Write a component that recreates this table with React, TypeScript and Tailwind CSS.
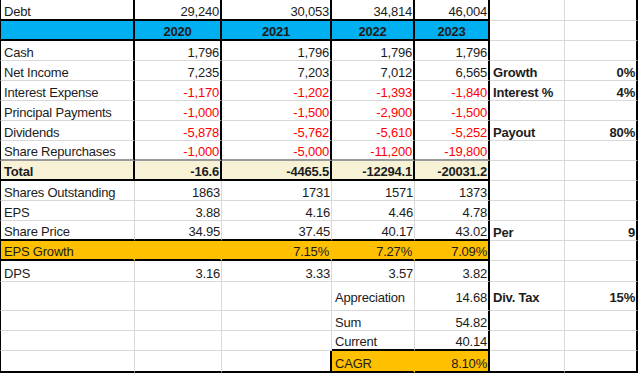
import React from 'react'

type Align = 'l' | 'r' | 'c'
type Cell = { t?: string; a?: Align; b?: boolean; red?: boolean }

const COLS = ['w-[135px]', 'w-[87px]', 'w-[110px]', 'w-[83px]', 'w-[75px]', 'w-[75px]', 'w-[73px]']

const HEIGHTS = [
  'h-[21px]', 'h-[20px]', 'h-[20px]', 'h-[20px]', 'h-[20px]', 'h-[20px]', 'h-[20px]', 'h-[20px]', 'h-[20px]',
  'h-[20px]', 'h-[20px]', 'h-[20px]', 'h-[20px]', 'h-[21px]', 'h-[29px]', 'h-[20px]', 'h-[20px]', 'h-[22px]',
]

const L = (t: string, b = false): Cell => ({ t, a: 'l', b })
const R = (t: string, b = false): Cell => ({ t, a: 'r', b })
const N = (t: string): Cell => ({ t, a: 'r', red: true })
const H = (t: string): Cell => ({ t, a: 'c', b: true })
const E: Cell = {}

const ROWS: Cell[][] = [
  [L('Debt'), R('29,240'), R('30,053'), R('34,814'), R('46,004'), E, E],
  [E, H('2020'), H('2021'), H('2022'), H('2023'), E, E],
  [L('Cash'), R('1,796'), R('1,796'), R('1,796'), R('1,796'), E, E],
  [L('Net Income'), R('7,235'), R('7,203'), R('7,012'), R('6,565'), L('Growth', true), R('0%', true)],
  [L('Interest Expense'), N('-1,170'), N('-1,202'), N('-1,393'), N('-1,840'), L('Interest %', true), R('4%', true)],
  [L('Principal Payments'), N('-1,000'), N('-1,500'), N('-2,900'), N('-1,500'), E, E],
  [L('Dividends'), N('-5,878'), N('-5,762'), N('-5,610'), N('-5,252'), L('Payout', true), R('80%', true)],
  [L('Share Repurchases'), N('-1,000'), N('-5,000'), N('-11,200'), N('-19,800'), E, E],
  [L('Total', true), R('-16.6', true), R('-4465.5', true), R('-12294.1', true), R('-20031.2', true), E, E],
  [L('Shares Outstanding'), R('1863'), R('1731'), R('1571'), R('1373'), E, E],
  [L('EPS'), R('3.88'), R('4.16'), R('4.46'), R('4.78'), E, E],
  [L('Share Price'), R('34.95'), R('37.45'), R('40.17'), R('43.02'), L('Per', true), R('9', true)],
  [L('EPS Growth'), E, R('7.15%'), R('7.27%'), R('7.09%'), E, E],
  [L('DPS'), R('3.16'), R('3.33'), R('3.57'), R('3.82'), E, E],
  [E, E, E, L('Appreciation'), R('14.68'), L('Div. Tax', true), R('15%', true)],
  [E, E, E, L('Sum'), R('54.82'), E, E],
  [E, E, E, L('Current'), R('40.14'), E, E],
  [E, E, E, L('CAGR'), R('8.10%'), E, E],
]

function rightBorder(r: number, c: number) {
  if (c === 6 || c === 4) return 'border-r-2 border-r-black'
  if (c === 5) return 'border-r border-r-[#d9d9d9]'
  if (r === 12) return 'border-r-2 border-r-[#ffc000]'
  if (r === 17 && c === 3) return 'border-r-2 border-r-[#ffc000]'
  if (r === 17 && c === 2) return 'border-r-2 border-r-black'
  if (r <= 8) return 'border-r-2 border-r-black'
  return 'border-r border-r-[#d9d9d9]'
}

function bottomBorder(r: number, c: number) {
  if (r === 17) return 'border-b-2 border-b-black'
  if (c >= 5) return 'border-b border-b-[#d9d9d9]'
  if (r === 0 || r === 1 || r === 8 || r === 11 || r === 12) return 'border-b-2 border-b-black'
  if (r === 7) return 'border-b-2 border-b-[#9a9a9a]'
  if (r === 16 && c >= 3) return 'border-b-2 border-b-black'
  return 'border-b border-b-[#d9d9d9]'
}

function background(r: number, c: number) {
  if (r === 1 && c <= 4) return 'bg-[#00b0f0]'
  if (r === 8 && c <= 4) return 'bg-[#f7f2d6]'
  if (r === 12 && c <= 4) return 'bg-[#ffc000]'
  if (r === 17 && (c === 3 || c === 4)) return 'bg-[#ffc000]'
  return 'bg-white'
}

export default function App() {
  return (
    <div className="w-[640px] h-[373px] bg-white overflow-hidden font-['Liberation_Sans',Arial,sans-serif] text-[13px] tracking-[-0.2px] leading-[13px] text-[#1c1c1c]">
      {ROWS.map((row, r) => (
        <div key={r} className={`flex ${HEIGHTS[r]}`}>
          {row.map((cell, c) => (
            <div
              key={c}
              className={[
                'flex shrink-0 whitespace-nowrap',
                COLS[c],
                rightBorder(r, c),
                bottomBorder(r, c),
                background(r, c),
                c === 0 ? 'border-l border-l-black' : '',
                r === 14 ? 'items-center pt-[2px]' : 'items-end pb-[1px]',
                cell.a === 'r' ? 'justify-end pr-[1px]' : cell.a === 'c' ? 'justify-center' : 'justify-start pl-[3px]',
                cell.b ? 'font-bold' : '',
                cell.red ? 'text-[#ff0000]' : '',
              ].join(' ')}
            >
              {cell.t}
            </div>
          ))}
        </div>
      ))}
    </div>
  )
}
